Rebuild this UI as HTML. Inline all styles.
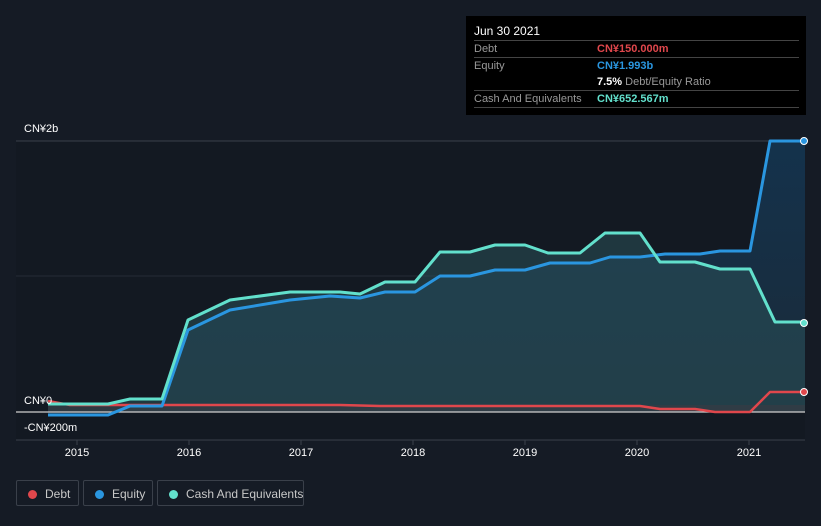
<!DOCTYPE html>
<html><head><style>
html,body{margin:0;width:821px;height:526px;overflow:hidden}
body{background:#151b25;font-family:"Liberation Sans",sans-serif;position:relative}
.tip{position:absolute;left:466px;top:16px;width:340px;height:99px;background:#000;color:#fff;font-size:11px}
.row{position:absolute;left:8px;width:325px;height:16px;border-top:1px solid #444;line-height:16px;color:#999}
.row span{position:absolute;left:123px;font-weight:bold;white-space:nowrap}
.leg{position:absolute;top:480px;height:26px;border:1px solid #3a404a;border-radius:2px;color:#c8c8c8;font-size:12px;line-height:26px;box-sizing:border-box;white-space:nowrap}
.leg i{position:absolute;left:11px;top:9px;width:9px;height:9px;border-radius:50%}
.lbl{position:absolute;color:#fff;font-size:11px}
</style></head><body>
<svg width="821" height="526" style="position:absolute;left:0;top:0">
<defs>
<linearGradient id="eq" x1="0" y1="0" x2="0" y2="1"><stop offset="0" stop-color="#14324c"/><stop offset="1" stop-color="#1a2a38"/></linearGradient>
</defs>
<rect x="16" y="141" width="789" height="299" fill="#131922"/>
<line x1="16" y1="141" x2="805" y2="141" stroke="#3a404a"/>
<line x1="16" y1="276" x2="805" y2="276" stroke="#262c36"/>
<line x1="16" y1="440" x2="805" y2="440" stroke="#3a404a"/>
<polygon fill="url(#eq)" points="48,415 108,415 130,406 162,406 188,330 230,310 290,300 330,296 360,298 385,292 415,292 440,276 470,276 495,270 525,270 550,263 590,263 610,257 640,257 665,254 700,254 720,251 750,251 770,141 805,141 805,412 48,412"/>
<polygon fill="#2a5058" fill-opacity="0.55" points="48,404 108,404 130,399 162,399 188,320 230,300 290,292 340,292 360,294 385,282 415,282 440,252 470,252 495,245 525,245 548,253 580,253 605,233 640,233 660,262 695,262 720,269 750,269 775,322 805,322 805,412 48,412"/>
<polygon fill="#3a3a42" fill-opacity="0.6" points="48,401 70,405 805,405 805,412 48,412"/>
<line x1="16" y1="412" x2="805" y2="412" stroke="#d0d0d0" stroke-width="1.2"/>
<polyline fill="none" stroke="#e0474c" stroke-width="2.5" stroke-linejoin="round" points="48,401 70,405 340,405 380,406 640,406 660,409 695,409 715,412 750,412 770,392 805,392"/>
<polyline fill="none" stroke="#2a96e0" stroke-width="3" stroke-linejoin="round" points="48,415 108,415 130,406 162,406 188,330 230,310 290,300 330,296 360,298 385,292 415,292 440,276 470,276 495,270 525,270 550,263 590,263 610,257 640,257 665,254 700,254 720,251 750,251 770,141 805,141"/>
<polyline fill="none" stroke="#62e0cc" stroke-width="3" stroke-linejoin="round" points="48,404 108,404 130,399 162,399 188,320 230,300 290,292 340,292 360,294 385,282 415,282 440,252 470,252 495,245 525,245 548,253 580,253 605,233 640,233 660,262 695,262 720,269 750,269 775,322 805,322"/>
<circle cx="804" cy="141" r="3.5" fill="#2a96e0" stroke="#fff" stroke-width="1"/>
<circle cx="804" cy="323" r="3.5" fill="#62e0cc" stroke="#fff" stroke-width="1"/>
<circle cx="804" cy="392" r="3.5" fill="#e0474c" stroke="#fff" stroke-width="1"/>
<g stroke="#3a404a"><line x1="77" y1="440" x2="77" y2="445"/><line x1="189" y1="440" x2="189" y2="445"/><line x1="301" y1="440" x2="301" y2="445"/><line x1="413" y1="440" x2="413" y2="445"/><line x1="525" y1="440" x2="525" y2="445"/><line x1="637" y1="440" x2="637" y2="445"/><line x1="749" y1="440" x2="749" y2="445"/></g>
<g fill="#fff" font-size="11" font-family="Liberation Sans" text-anchor="middle"><text x="77" y="456">2015</text><text x="189" y="456">2016</text><text x="301" y="456">2017</text><text x="413" y="456">2018</text><text x="525" y="456">2019</text><text x="637" y="456">2020</text><text x="749" y="456">2021</text></g>
</svg>
<div class="lbl" style="left:24px;top:123px">CN¥2b</div>
<div class="lbl" style="left:24px;top:395px">CN¥0</div>
<div class="lbl" style="left:24px;top:422px">-CN¥200m</div>
<div class="tip">
<div style="position:absolute;left:8px;top:8px;font-size:12px">Jun 30 2021</div>
<div class="row" style="top:24px">Debt<span style="color:#e0474c">CN¥150.000m</span></div>
<div class="row" style="top:41px">Equity<span style="color:#2a96e0">CN¥1.993b</span></div>
<div class="row" style="top:58px;border-top:none"><span style="color:#fff">7.5% <b style="color:#999;font-weight:normal">Debt/Equity Ratio</b></span></div>
<div class="row" style="top:74px;border-bottom:1px solid #444">Cash And Equivalents<span style="color:#62e0cc">CN¥652.567m</span></div>
</div>
<div class="leg" style="left:16px;width:63px"><i style="background:#e0474c"></i><span style="position:absolute;left:28px">Debt</span></div>
<div class="leg" style="left:83px;width:70px"><i style="background:#2a96e0"></i><span style="position:absolute;left:28px">Equity</span></div>
<div class="leg" style="left:157px;width:147px"><i style="background:#62e0cc"></i><span style="position:absolute;left:28px">Cash And Equivalents</span></div>
</body></html>
